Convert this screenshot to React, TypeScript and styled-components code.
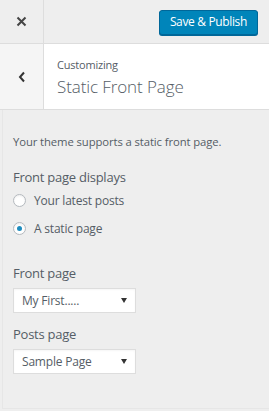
import React from "react";
import styled, {createGlobalStyle} from "styled-components";

const GlobalStyle = createGlobalStyle`
  html, body {
    margin: 0;
    padding: 0;
    background: #eeeeee;
  }
  body {
    font-family: "Open Sans", "Noto Sans", sans-serif;
    color: #555d66;
  }
`

const Panel = styled.div`
  width: 269px;
  height: 411px;
  background: #eeeeee;
  display: flex;
  flex-direction: column;
  overflow: hidden;
`

const Header = styled.div`
  display: flex;
  height: 43px;
  border-bottom: 1px solid #dddddd;
  align-items: center;
`

const IconButton = styled.button<{light?: boolean}>`
  width: 44px;
  height: 100%;
  flex: none;
  border: 0;
  border-right: 1px solid #dddddd;
  background: ${props => props.light ? "#f5f5f5" : "#eeeeee"};
  display: flex;
  align-items: center;
  justify-content: center;
  padding: 0;
  color: #444;
`

const Actions = styled.div`
  flex: 1;
  display: flex;
  justify-content: flex-end;
  padding-right: 11px;
`

const PrimaryButton = styled.button`
  height: 25px;
  padding: 0 10px 1px;
  border: 1px solid #006799;
  border-radius: 3px;
  background: #0085ba;
  box-shadow: 0 1px 0 #006799;
  color: #ffffff;
  font-family: "Open Sans", sans-serif;
  font-size: 12px;
  letter-spacing: -0.35px;
  margin-top: 1px;
`

const SectionHeader = styled.div`
  display: flex;
  height: 65px;
  border-bottom: 1px solid #dddddd;
`

const SectionTitle = styled.div`
  flex: 1;
  background: #ffffff;
  padding: 14px 0 0 13px;
  display: flex;
  flex-direction: column;
`

const Eyebrow = styled.span`
  font-size: 11px;
  line-height: 14px;
  color: #555d66;
  letter-spacing: -0.2px;
`

const Title = styled.span`
  font-size: 17px;
  font-weight: 300;
  line-height: 24px;
  margin-top: 3px;
  color: #555d66;
  letter-spacing: -0.1px;
`

const Body = styled.div`
  flex: 1;
  margin-left: 2px;
  border-left: 1px solid #e6e6e6;
  border-bottom: 1px solid #e6e6e6;
  margin-bottom: 2px;
  padding: 24px 0 0 10px;
  display: flex;
  flex-direction: column;
`

const Description = styled.p`
  margin: 0;
  font-size: 11.3px;
  line-height: 16px;
  color: #555d66;
  letter-spacing: -0.1px;
`

const Group = styled.div<{top: number}>`
  margin-top: ${props => props.top}px;
  display: flex;
  flex-direction: column;
`

const Label = styled.div`
  font-size: 13px;
  line-height: 18px;
  color: #555d66;
  letter-spacing: -0.25px;
`

const RadioRow = styled.label`
  display: flex;
  align-items: center;
  gap: 8px;
  height: 28px;
  font-size: 12px;
  color: #555d66;
  letter-spacing: -0.2px;
`

const Radio = styled.span<{checked?: boolean}>`
  width: 11px;
  height: 11px;
  border: 1px solid #b4b9be;
  border-radius: 50%;
  background: #ffffff;
  box-shadow: inset 0 1px 2px rgba(0, 0, 0, 0.07);
  display: flex;
  align-items: center;
  justify-content: center;

  &::after {
    content: "";
    display: ${props => props.checked ? "block" : "none"};
    width: 5px;
    height: 5px;
    border-radius: 50%;
    background: #1e8cbe;
  }
`

const Select = styled.div`
  width: 123px;
  height: 25px;
  margin-top: 6px;
  background: #ffffff;
  border: 1px solid #dddddd;
  box-shadow: inset 0 1px 2px rgba(0, 0, 0, 0.04);
  display: flex;
  align-items: center;
  justify-content: space-between;
  padding: 0 8px 0 8px;
  box-sizing: border-box;
  font-size: 12px;
  color: #555d66;
  letter-spacing: -0.2px;
`

const Caret = styled.span`
  width: 0;
  height: 0;
  border-left: 3px solid transparent;
  border-right: 3px solid transparent;
  border-top: 5px solid #333;
`

export default function App() {
    return <Panel>
        <GlobalStyle/>
        <Header>
            <IconButton aria-label="Close">
                <svg width="11" height="11" viewBox="0 0 11 11">
                    <path d="M1.5 1.5 L9.5 9.5 M9.5 1.5 L1.5 9.5" stroke="#444" strokeWidth="2"/>
                </svg>
            </IconButton>
            <Actions>
                <PrimaryButton>Save &amp; Publish</PrimaryButton>
            </Actions>
        </Header>
        <SectionHeader>
            <IconButton light aria-label="Back">
                <svg width="8" height="12" viewBox="0 0 8 12">
                    <path d="M6 1.5 L2 6 L6 10.5" stroke="#333" strokeWidth="2" fill="none"/>
                </svg>
            </IconButton>
            <SectionTitle>
                <Eyebrow>Customizing</Eyebrow>
                <Title>Static Front Page</Title>
            </SectionTitle>
        </SectionHeader>
        <Body>
            <Description>Your theme supports a static front page.</Description>
            <Group top={18}>
                <Label>Front page displays</Label>
                <RadioRow><Radio/>Your latest posts</RadioRow>
                <RadioRow><Radio checked/>A static page</RadioRow>
            </Group>
            <Group top={22}>
                <Label>Front page</Label>
                <Select>My First.....<Caret/></Select>
            </Group>
            <Group top={12}>
                <Label>Posts page</Label>
                <Select>Sample Page<Caret/></Select>
            </Group>
        </Body>
    </Panel>
}
